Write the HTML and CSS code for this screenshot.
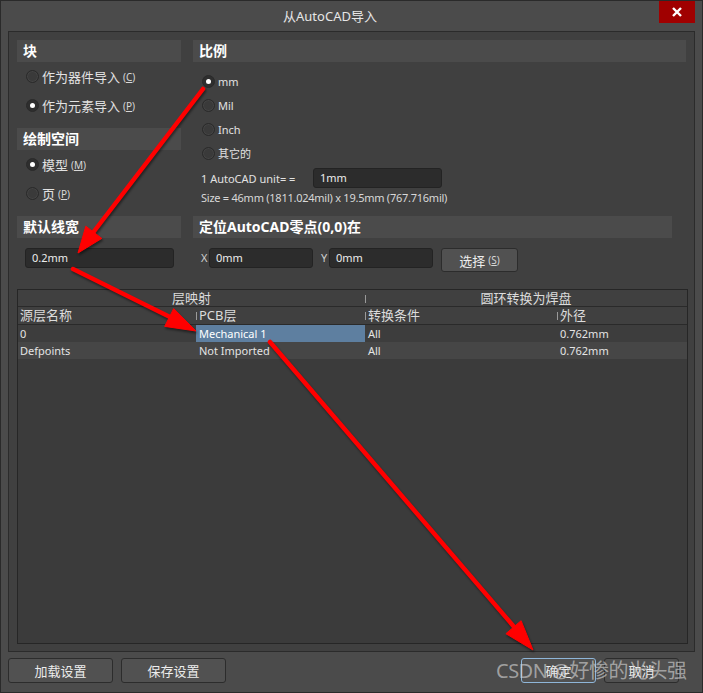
FILE: index.html
```html
<!DOCTYPE html>
<html lang="zh">
<head>
<meta charset="utf-8">
<title>从AutoCAD导入</title>
<link rel="stylesheet" href="styles.css">
</head>
<body>
<div class="window">
  <div class="titlebar">
    <div class="title">从AutoCAD导入</div>
    <div class="close">
      <svg width="10" height="10" viewBox="0 0 10 10"><path d="M1 1 L9 9 M9 1 L1 9" stroke="#fff" stroke-width="2.4" fill="none"/></svg>
    </div>
  </div>

  <div class="panel">
    <div class="options">
      <div class="col">
        <div class="hdr">块</div>
        <div class="radio tall"><span class="dot"></span>作为器件导入 <span class="acc">(<u>C</u>)</span></div>
        <div class="radio tall"><span class="dot on"></span>作为元素导入 <span class="acc">(<u>P</u>)</span></div>
        <div class="hdr gap">绘制空间</div>
        <div class="radio tall"><span class="dot on"></span>模型 <span class="acc">(<u>M</u>)</span></div>
        <div class="radio tall"><span class="dot"></span>页 <span class="acc">(<u>P</u>)</span></div>
      </div>
      <div class="col">
        <div class="hdr">比例</div>
        <div class="radios">
          <div class="radio"><span class="dot on"></span>mm</div>
          <div class="radio"><span class="dot"></span>Mil</div>
          <div class="radio"><span class="dot"></span>Inch</div>
          <div class="radio"><span class="dot"></span>其它的</div>
        </div>
        <div class="unit-row">
          <span class="unit-label">1 AutoCAD unit= =</span>
          <div class="input unit-input">1mm</div>
        </div>
        <div class="size">Size = 46mm (1811.024mil) x 19.5mm (767.716mil)</div>
      </div>
      <div class="hdr row-b">默认线宽</div>
      <div class="hdr row-b narrow">定位AutoCAD零点(0,0)在</div>
      <div class="row-c"><div class="input width-input">0.2mm</div></div>
      <div class="row-c origin">
        <span class="axis">X</span><div class="input xy">0mm</div>
        <span class="axis spaced">Y</span><div class="input xy">0mm</div>
        <div class="btn pick">选择 <span class="acc">(<u>S</u>)</span></div>
      </div>
    </div>

    <div class="table">
      <div class="grp">
        <div class="cell center span2">层映射</div>
        <div class="cell center span2 tick">圆环转换为焊盘</div>
      </div>
      <div class="thead">
        <div class="cell">源层名称</div>
        <div class="cell tick">PCB层</div>
        <div class="cell tick">转换条件</div>
        <div class="cell tick">外径</div>
      </div>
      <div class="trow odd">
        <div class="cell">0</div>
        <div class="cell sel">Mechanical 1</div>
        <div class="cell">All</div>
        <div class="cell">0.762mm</div>
      </div>
      <div class="trow even">
        <div class="cell">Defpoints</div>
        <div class="cell">Not Imported</div>
        <div class="cell">All</div>
        <div class="cell">0.762mm</div>
      </div>
    </div>
  </div>

  <div class="footer">
    <div class="btn foot">加载设置</div>
    <div class="btn foot">保存设置</div>
    <div class="spacer"></div>
    <div class="btn foot small focus">确定</div>
    <div class="btn foot small">取消</div>
  </div>

  <div class="watermark">CSDN @好惨的光头强</div>

  <svg class="arrows" width="703" height="693" viewBox="0 0 703 693">
    <g fill="#ff0000" stroke="#ff0000">
      <line x1="203" y1="89" x2="92" y2="234" stroke-width="4.5" stroke-linecap="round"/>
      <polygon points="78,253 101.8,238.4 85.8,226.2" stroke-width="1"/>
      <line x1="73" y1="269" x2="172" y2="318" stroke-width="4.5" stroke-linecap="round"/>
      <polygon points="196,331 164.7,326.4 173.7,308.6" stroke-width="1"/>
      <line x1="270" y1="342" x2="515" y2="628" stroke-width="4.5" stroke-linecap="round"/>
      <polygon points="533,650 505.9,633.7 521.1,620.7" stroke-width="1"/>
    </g>
  </svg>
</div>
</body>
</html>
```

FILE: styles.css
```css
* { box-sizing: border-box; }

html, body {
  margin: 0;
  padding: 0;
  background: #4b4b4b;
}

body {
  font-family: "Noto Sans", "Noto Sans CJK SC", sans-serif;
  font-size: 11px;
  color: #e2e2e2;
}

.window {
  position: relative;
  width: 703px;
  height: 693px;
  background: #4b4b4b;
  border: 1px solid #2a2a2a;
  display: flex;
  flex-direction: column;
  overflow: hidden;
}

/* title bar */
.titlebar {
  height: 30px;
  display: flex;
  align-items: flex-start;
  flex: none;
}

.title {
  flex: 1;
  text-align: center;
  line-height: 30px;
  font-size: 13px;
  color: #e6e6e6;
}

.close {
  width: 36px;
  height: 22px;
  margin-right: 7px;
  background: #a00000;
  display: flex;
  align-items: center;
  justify-content: center;
}

/* main panel */
.panel {
  height: 621px;
  margin: 0 7px;
  background: #404040;
  border: 1px solid #2b2b2b;
  padding: 8px 6px 7px 8px;
  display: flex;
  flex-direction: column;
  flex: none;
}

.options {
  display: grid;
  grid-template-columns: 164px 493px;
  column-gap: 12px;
  align-items: start;
}

.hdr {
  height: 22px;
  line-height: 22px;
  background: #4b4b4b;
  padding-left: 6px;
  font-size: 14px;
  font-weight: bold;
  color: #ffffff;
}

.hdr.gap { margin-top: 8px; }
.hdr.row-b { margin-top: 8px; }
.hdr.narrow { margin-right: 14px; }

.radio {
  display: flex;
  align-items: center;
  height: 24px;
  padding-left: 9px;
  font-size: 11px;
  color: #e2e2e2;
}

.radio.tall {
  height: 29px;
  font-size: 13px;
}

.dot {
  width: 13px;
  height: 13px;
  border-radius: 50%;
  background: #3a3a3a;
  border: 1px solid #2a2a2a;
  box-shadow: inset 0 0 0 1px #444;
  margin-right: 3px;
  position: relative;
  flex: none;
}

.dot.on {
  background: #2e2e2e;
  box-shadow: none;
}

.dot.on::after {
  content: "";
  position: absolute;
  left: 3px;
  top: 3px;
  width: 5px;
  height: 5px;
  border-radius: 50%;
  background: #ffffff;
}

.acc {
  font-size: 10px;
  margin-left: 3px;
  color: #d8d8d8;
}

.acc u { text-underline-offset: 1px; }

.radios { padding-top: 7px; }

.unit-row {
  display: flex;
  align-items: center;
  margin-top: 3px;
  padding-left: 8px;
  height: 20px;
}

.unit-label { width: 112px; }

.input {
  height: 20px;
  line-height: 18px;
  background: #2c2c2c;
  border: 1px solid #232323;
  border-radius: 3px;
  padding-left: 6px;
  color: #ececec;
  font-size: 11px;
}

.unit-input { width: 129px; }

.size {
  height: 20px;
  line-height: 20px;
  padding-left: 8px;
  color: #d8d8d8;
  letter-spacing: -0.25px;
}

.row-c { margin-top: 10px; }

.width-input {
  margin-left: 8px;
  width: 149px;
}

.origin {
  display: flex;
  align-items: flex-start;
  padding-left: 8px;
}

.axis {
  width: 8px;
  line-height: 20px;
  color: #cfcfcf;
  font-size: 11px;
}

.axis.spaced { margin-left: 8px; }

.xy { width: 104px; }

.btn {
  height: 24px;
  background: #515151;
  border: 1px solid #2c2c2c;
  border-radius: 3px;
  display: flex;
  align-items: center;
  justify-content: center;
  font-size: 13px;
  color: #ececec;
}

.pick {
  width: 77px;
  margin-left: 8px;
}

/* table */
.table {
  flex: 1;
  margin-top: 17px;
  background: #3b3b3b;
  border: 1px solid #262626;
}

.grp, .thead, .trow {
  display: grid;
  grid-template-columns: 178px 169px 192px 1fr;
}

.grp {
  height: 17px;
  background: #404040;
  border-bottom: 1px solid #2a2a2a;
  font-size: 13px;
  line-height: 16px;
  color: #dcdcdc;
}

.thead {
  height: 18px;
  background: #404040;
  border-bottom: 1px solid #2a2a2a;
  font-size: 13px;
  line-height: 17px;
  color: #dcdcdc;
}

.cell {
  position: relative;
  padding-left: 3px;
  white-space: nowrap;
  overflow: hidden;
}

.thead .cell:first-child, .trow .cell:first-child { padding-left: 2px; }

.cell.center {
  text-align: center;
  padding-left: 0;
}

.span2 { grid-column: span 2; }

.tick::before {
  content: "";
  position: absolute;
  left: 0;
  top: 5px;
  width: 1px;
  height: 8px;
  background: #9a9a9a;
}

.trow {
  height: 17px;
  line-height: 17px;
  font-size: 11px;
  color: #e4e4e4;
}

.trow.odd { background: #3d3d3d; }
.trow.even { background: #464646; }

.cell.sel {
  background: #5e7fa0;
  color: #ffffff;
}

/* footer */
.footer {
  display: flex;
  padding: 6px 23px 0 7px;
  gap: 8px;
}

.foot { width: 105px; height: 25px; }
.foot.small { width: 75px; }
.spacer { flex: 1; }

.focus { border-color: #8fb6d9; }

.watermark {
  position: absolute;
  left: 495px;
  top: 657px;
  font-size: 20px;
  line-height: 26px;
  letter-spacing: -0.5px;
  color: rgba(215, 215, 215, 0.62);
  white-space: nowrap;
}

.arrows {
  position: absolute;
  left: -1px;
  top: -1px;
  pointer-events: none;
  filter: drop-shadow(1px 2px 1px rgba(0, 0, 0, 0.45));
}
```
